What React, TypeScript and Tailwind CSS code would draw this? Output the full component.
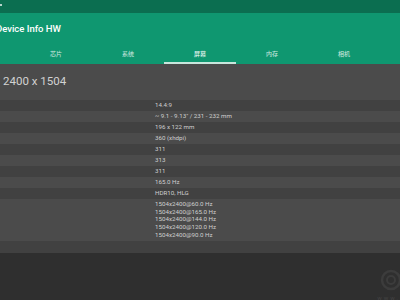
const tabs = ['芯片', '系统', '屏幕', '内存', '相机'];

const rows = [
  '14.4:9',
  '~ 9.1 - 9.13" / 231 - 232 mm',
  '196 x 122 mm',
  '360 (xhdpi)',
  '311',
  '313',
  '311',
  '165.0 Hz',
  'HDR10, HLG',
];

const modes = [
  '1504x2400@60.0 Hz',
  '1504x2400@165.0 Hz',
  '1504x2400@144.0 Hz',
  '1504x2400@120.0 Hz',
  '1504x2400@90.0 Hz',
];

export default function App() {
  return (
    <div
      className="w-[400px] h-[300px] overflow-hidden flex flex-col bg-[#2f2f2f]"
      style={{ fontFamily: 'Roboto, "Noto Sans CJK SC", sans-serif' }}
    >
      {/* status bar */}
      <div className="h-[13px] bg-[#0b6e50] relative">
        <div className="absolute left-0 top-[4px] w-[2px] h-[2px] bg-white/70" />
      </div>

      {/* app bar */}
      <div className="h-[51px] bg-[#0f9770] flex flex-col">
        <div className="h-[32px] flex items-center">
          <span className="ml-[-4px] text-[9.5px] font-medium text-white">Device Info HW</span>
        </div>
        <div className="flex-1 flex pl-[20px]">
          {tabs.map((t, i) => (
            <div key={t} className="w-[72px] flex flex-col">
              <div
                className={
                  'flex-1 flex items-center justify-center text-[6px] ' +
                  (i === 2 ? 'text-white' : 'text-white/80')
                }
              >
                {t}
              </div>
              <div className={'h-[2px] ' + (i === 2 ? 'bg-[#c8e6dc]' : '')} />
            </div>
          ))}
        </div>
      </div>

      {/* content */}
      <div className="bg-[#4b4b4b]">
        <div className="h-[36px] flex items-center pl-[3px] text-[11.5px] text-[#d2d2d2]">
          2400 x 1504
        </div>
        {rows.map((v, i) => (
          <div
            key={i}
            className={
              'h-[11px] flex items-center pl-[155px] text-[6.2px] text-[#cfcfcf] ' +
              (i % 2 === 0 ? 'bg-[#414141]' : 'bg-[#4b4b4b]')
            }
          >
            {v}
          </div>
        ))}
        <div className="h-[42px] pt-[2px] pl-[155px] text-[6.2px] leading-[7.7px] text-[#cfcfcf]">
          {modes.map((m) => (
            <div key={m}>{m}</div>
          ))}
        </div>
        <div className="h-[12px] bg-[#414141]" />
      </div>

      {/* watermark */}
      <div className="flex-1 relative">
        <svg className="absolute right-[-4px] top-[16px]" width="26" height="22" viewBox="0 0 26 22">
          <circle cx="13" cy="11" r="9" fill="none" stroke="#3c3c3c" strokeWidth="2.5" />
          <circle cx="13" cy="11" r="4" fill="none" stroke="#3c3c3c" strokeWidth="2" />
        </svg>
        <div className="absolute right-[0px] bottom-[-2px] text-[6px] tracking-[2px] text-[#444]">www.</div>
      </div>
    </div>
  );
}
